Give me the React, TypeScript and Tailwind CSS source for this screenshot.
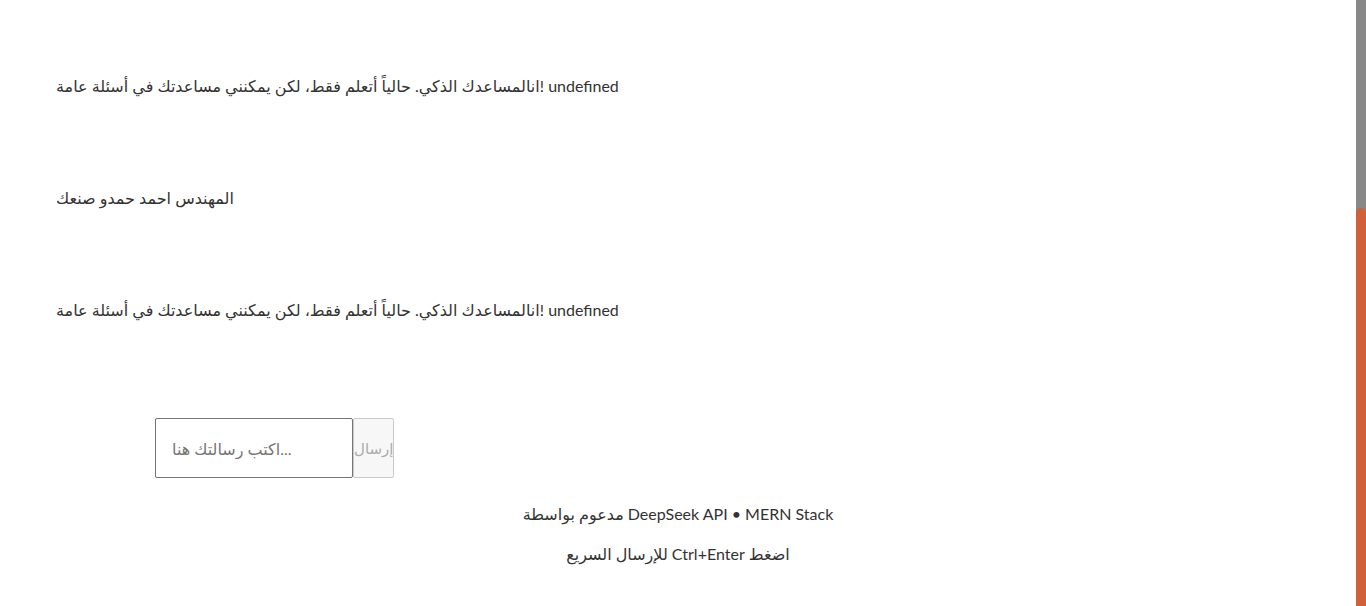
import { useLayoutEffect, useRef, useState } from "react";

const botText =
  "undefined !انالمساعدك الذكي. حالياً أتعلم فقط، لكن يمكنني مساعدتك في أسئلة عامة";

type Message = { id: number; role: "bot" | "user"; text: string };

const messages: Message[] = [
  { id: 1, role: "bot", text: botText },
  { id: 2, role: "user", text: "المهندس احمد حمدو صنعك" },
  { id: 3, role: "bot", text: botText },
];

export default function App() {
  const scrollRef = useRef<HTMLDivElement>(null);
  const [input, setInput] = useState("");

  // keep the chat scrolled to the latest message
  useLayoutEffect(() => {
    const el = scrollRef.current;
    if (el) el.scrollTop = el.scrollHeight;
  }, []);

  return (
    <div className="flex h-screen bg-white text-[#333] [font-family:Lato,'Noto_Sans','DejaVu_Sans',sans-serif]">
      <div
        ref={scrollRef}
        className="flex-1 overflow-y-auto [scrollbar-width:none] [&::-webkit-scrollbar]:hidden"
      >
        <div className="pt-[347px]">
          <div className="pl-[56px]">
            {messages.map((m) => (
              <div key={m.id} className="py-[44px]">
                <p dir="rtl" className="w-fit text-base leading-6">
                  {m.text}
                </p>
              </div>
            ))}
          </div>

          <div className="flex pl-[155px] pt-[52px]">
            <input
              type="text"
              value={input}
              onChange={(e) => setInput(e.target.value)}
              placeholder="اكتب رسالتك هنا..."
              className="w-[198px] h-[60px] border border-[#767676] rounded-[2px] px-4 text-base outline-none placeholder:text-[#757575]"
            />
            <button
              disabled={!input.trim()}
              className="w-[41px] h-[60px] px-0 border border-[#c9c9c9] bg-[#f7f7f7] text-[#ababab] text-[15px] rounded-[2px] whitespace-nowrap"
            >
              إرسال
            </button>
          </div>

          <footer className="pt-[24px] pb-[40px] text-center text-base leading-6">
            <p dir="rtl">DeepSeek API • MERN Stack مدعوم بواسطة</p>
            <p dir="rtl" className="mt-4">
              اضغط Ctrl+Enter للإرسال السريع
            </p>
          </footer>
        </div>
      </div>

      {/* scrollbar: gray track, orange thumb at the bottom */}
      <div className="flex w-[10px] flex-col bg-[#888]">
        <div className="h-[208px]" />
        <div className="flex-1 rounded-t-[5px] bg-[#d0603a]" />
      </div>
    </div>
  );
}
